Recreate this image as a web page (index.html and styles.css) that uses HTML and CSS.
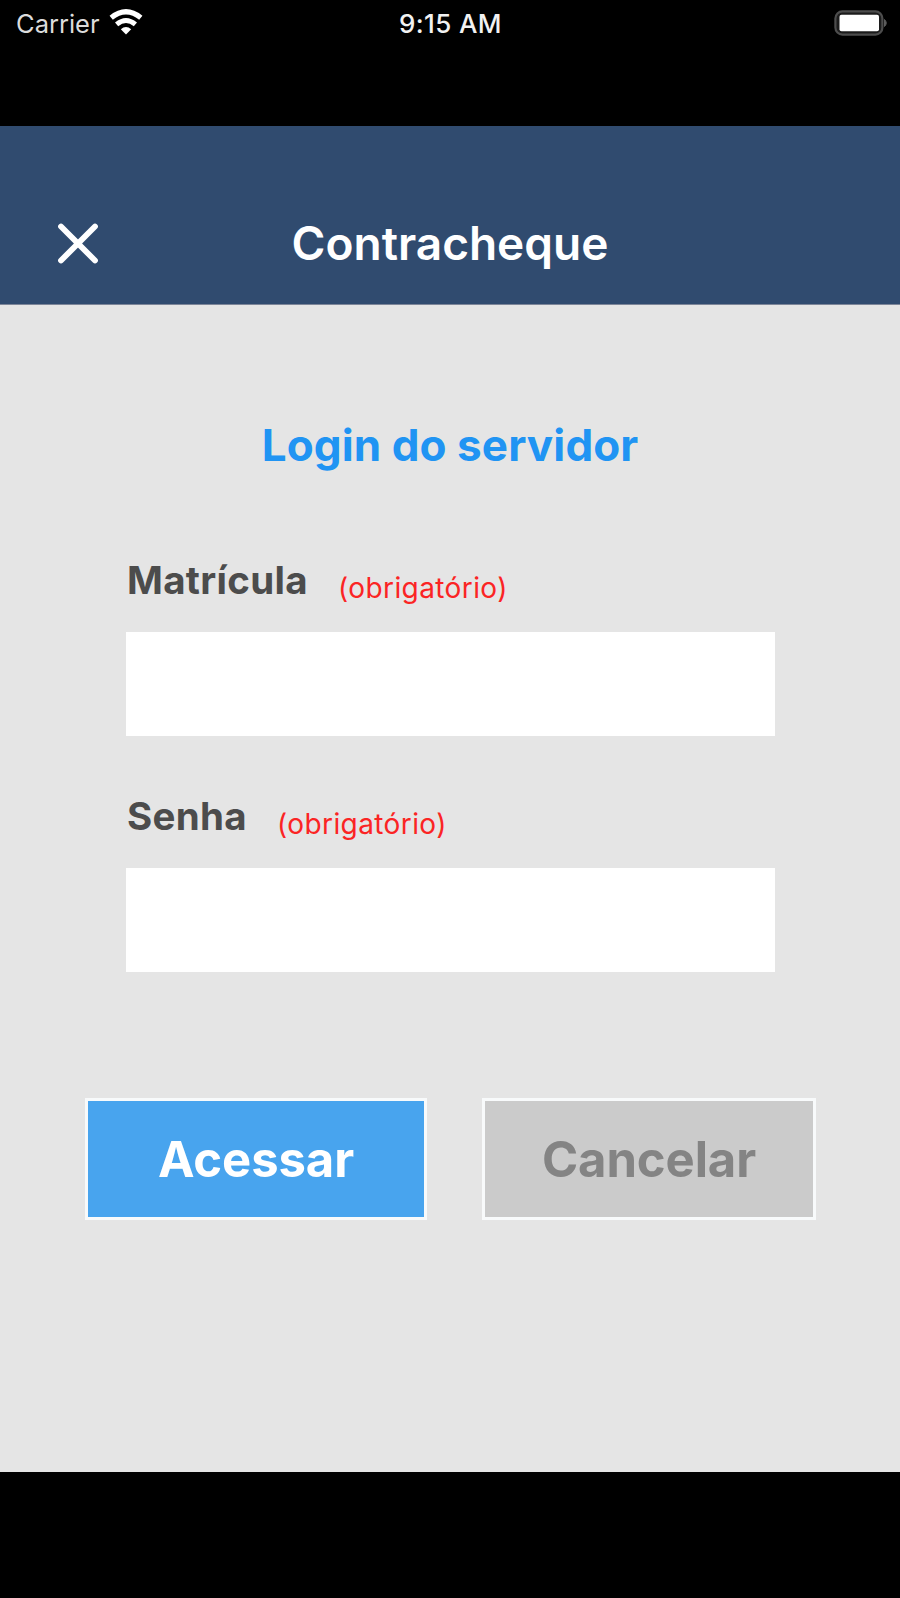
FILE: index.html
```html
<!DOCTYPE html>
<html lang="pt-BR">
<head>
<meta charset="utf-8">
<title>Contracheque</title>
<link rel="stylesheet" href="styles.css">
</head>
<body>
<div class="statusbar">
  <div class="carrier">
    <span class="carrier-name">Carrier</span>
    <svg class="wifi" viewBox="0 0 34 26" width="34" height="26">
      <path d="M2.2 8.8Q17 -3.2 31.8 8.8" fill="none" stroke="#fff" stroke-width="5.2"/>
      <path d="M7.6 15.4Q17 7.6 26.4 15.4" fill="none" stroke="#fff" stroke-width="5"/>
      <path d="M11.8 20.2Q17 15.8 22.2 20.2L17 25.5Z" fill="#fff"/>
    </svg>
  </div>
  <span class="time">9:15 AM</span>
  <svg class="battery" viewBox="0 0 56 28" width="56" height="28">
    <rect x="2.4" y="2.4" width="47" height="23.2" rx="7" fill="#1c1c1c" stroke="#4d4d4d" stroke-width="2.2"/>
    <rect x="6.5" y="5.800" width="39.500" height="16.4" rx="2" fill="#fff"/>
    <path d="M51.5 10.5Q55 14 51.5 17.5Z" fill="#5c5c5c" stroke="#5c5c5c" stroke-width="1"/>
  </svg>
</div>
<header class="header">
  <button class="close" aria-label="Fechar">
    <svg viewBox="0 0 42 42" width="42" height="42"><path d="M4 4.500L38 38.500M38 4.500L4 38.500" stroke="#fff" stroke-width="5.8" stroke-linecap="round"/></svg>
  </button>
  <h1 class="title">Contracheque</h1>
</header>
<main class="main">
  <h2 class="heading">Login do servidor</h2>
  <form class="form">
    <div class="field">
      <div class="label-row"><label class="label label-user" for="matricula">Matrícula</label><span class="required">(obrigatório)</span></div>
      <input class="input" id="matricula" type="text">
    </div>
    <div class="field">
      <div class="label-row"><label class="label label-pass" for="senha">Senha</label><span class="required">(obrigatório)</span></div>
      <input class="input" id="senha" type="password">
    </div>
  </form>
  <div class="actions">
    <button class="btn btn-primary">Acessar</button>
    <button class="btn btn-cancel">Cancelar</button>
  </div>
</main>
</body>
</html>
```
FILE: styles.css
```css
* { box-sizing: border-box; }
body {
  margin: 0;
  height: 1598px;
  background: #000;
  font-family: Inter, "Liberation Sans", sans-serif;
  overflow: hidden;
}
h1, h2 { margin: 0; }
button { font-family: inherit; padding: 0; }

.statusbar {
  height: 126px;
  padding: 9px 11px 0 15px;
  display: grid;
  grid-template-columns: 1fr auto 1fr;
  align-items: start;
  color: #dcdcdc;
  line-height: 30px;
}
.carrier { display: flex; gap: 9px; padding-left: 1px; }
.carrier-name { font-size: 25.5px; }
.time { font-size: 26px; font-weight: 500; letter-spacing: 0.4px; margin-right: 3px; color: #f2f2f2; }
.battery { justify-self: end; }

.header {
  height: 179px;
  padding-top: 57px;
  background: #304b6f;
  border-bottom: 1px solid #7d8699;
  display: grid;
  grid-template-columns: 158px 1fr 158px;
}
.close {
  width: 42px;
  height: 42px;
  margin: 39px 0 0 57px;
  background: none;
  border: 0;
}
.close svg { display: block; }
.title {
  font-size: 46px;
  font-weight: 600;
  letter-spacing: 0;
  line-height: 121px;
  color: #fff;
  text-align: center;
}

.main { height: 1167px; background: #e5e5e5; overflow: hidden; }
.heading {
  margin-top: 110px;
  font-size: 44px;
  font-weight: 700;
  letter-spacing: 0.1px;
  line-height: 60px;
  color: #2094f3;
  text-align: center;
}
.form { padding: 71px 125px 0 126px; }
.field { height: 235.5px; }
.label-row { height: 86px; display: flex; align-items: flex-start; }
.label { font-size: 38.5px; font-weight: 700; letter-spacing: 0.3px; color: #4c4c4c; line-height: 68px; }
.label-user { width: 212px; padding-left: 1px; }
.label-pass { width: 151px; padding-left: 1px; }
.required { font-size: 28px; letter-spacing: 0.4px; color: #fb2424; line-height: 84px; }
.input { display: block; width: 649px; height: 104px; border: 0; background: #fff; padding: 0 20px; font-size: 38px; }
.actions { margin-top: 81px; padding-left: 85px; display: flex; gap: 55px; }
.btn { height: 122px; border: 3px solid #f8fafb; font-size: 49px; font-weight: 700; letter-spacing: -0.1px; padding-top: 1px; }
.btn-primary { width: 342px; background: #48a4ee; color: #fff; }
.btn-cancel { width: 334px; background: #cbcbcb; color: #848484; }
```
